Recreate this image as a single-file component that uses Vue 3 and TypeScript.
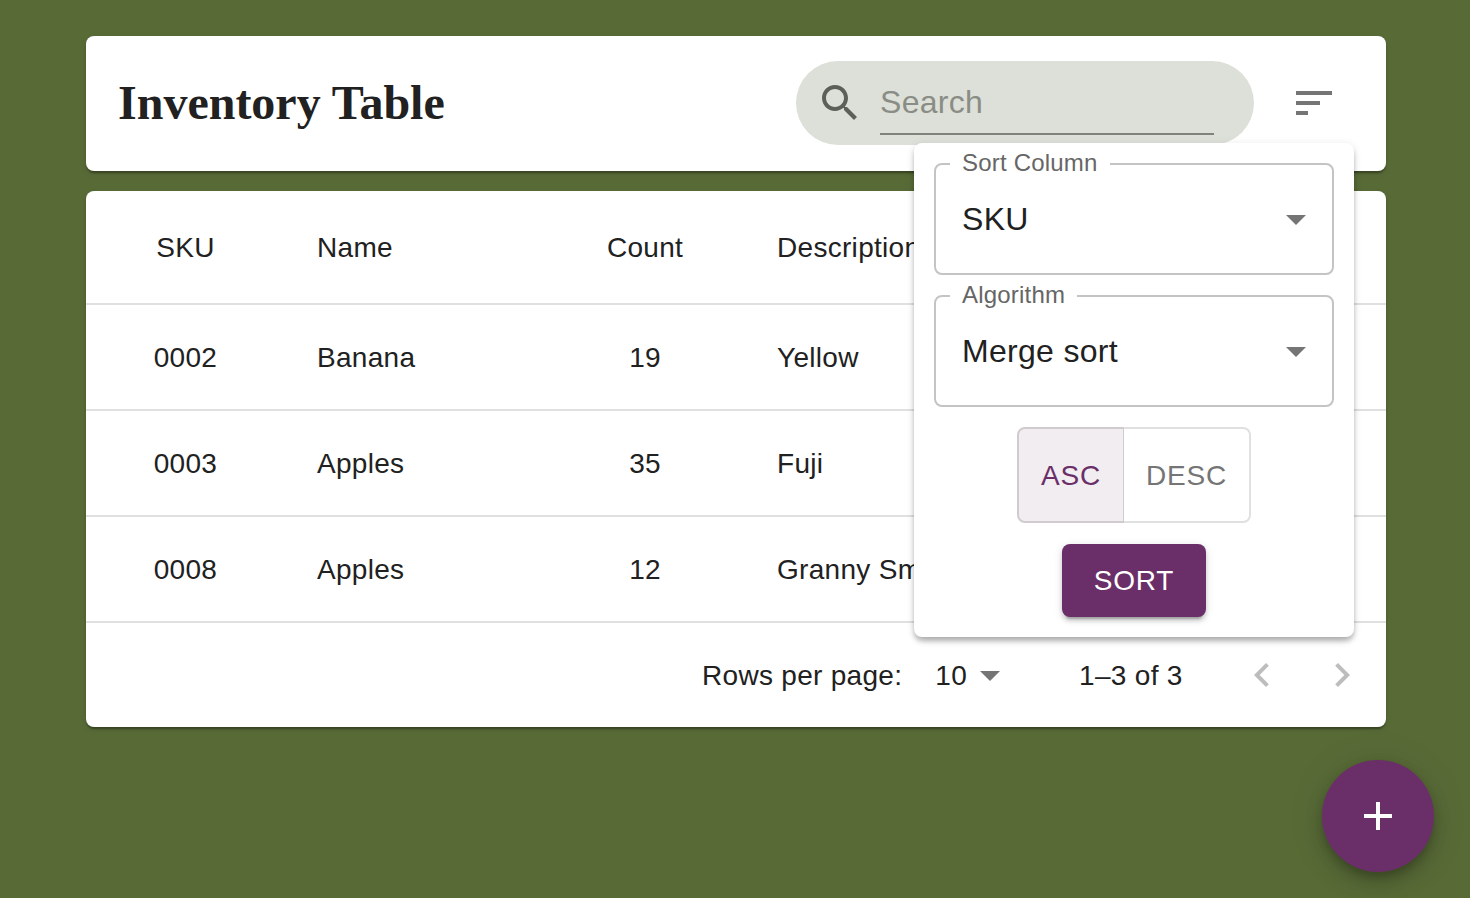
<script setup lang="ts">
interface Item {
  sku: string
  name: string
  count: number
  description: string
}

const items: Item[] = [
  { sku: '0002', name: 'Banana', count: 19, description: 'Yellow' },
  { sku: '0003', name: 'Apples', count: 35, description: 'Fuji' },
  { sku: '0008', name: 'Apples', count: 12, description: 'Granny Smith' },
]
</script>

<template>
  <div class="page">
    <header class="card top">
      <h1 class="title">Inventory Table</h1>
      <div class="search">
        <svg class="search__icon" viewBox="0 0 24 24">
          <path d="M15.5 14h-.79l-.28-.27C15.41 12.59 16 11.11 16 9.5 16 5.91 13.09 3 9.5 3S3 5.91 3 9.5 5.91 16 9.5 16c1.61 0 3.09-.59 4.23-1.57l.27.28v.79l5 4.99L20.49 19l-4.99-5zm-6 0C7.01 14 5 11.99 5 9.5S7.01 5 9.5 5 14 7.01 14 9.5 11.99 14 9.5 14z" />
        </svg>
        <div class="search__field">Search</div>
      </div>
      <button class="sort-toggle" type="button" aria-label="Sort">
        <svg viewBox="0 0 24 24"><path d="M3 18h6v-2H3v2zM3 6v2h18V6H3zm0 7h12v-2H3v2z" /></svg>
      </button>
    </header>

    <section class="card table-card">
      <table class="table">
        <colgroup>
          <col class="col-sku" />
          <col class="col-name" />
          <col class="col-count" />
          <col />
        </colgroup>
        <thead>
          <tr>
            <th class="center">SKU</th>
            <th>Name</th>
            <th class="center">Count</th>
            <th>Description</th>
          </tr>
        </thead>
        <tbody>
          <tr v-for="item in items" :key="item.sku">
            <td class="center">{{ item.sku }}</td>
            <td>{{ item.name }}</td>
            <td class="center">{{ item.count }}</td>
            <td>{{ item.description }}</td>
          </tr>
        </tbody>
      </table>
      <footer class="pager">
        <span class="pager__text">Rows per page:</span>
        <span class="pager__text pager__size">10</span>
        <svg class="pager__arrow" viewBox="0 0 24 24"><path d="M7 10l5 5 5-5z" /></svg>
        <span class="pager__text pager__count">1–3 of 3</span>
        <svg class="pager__nav" viewBox="0 0 24 24"><path d="M15.41 7.41L14 6l-6 6 6 6 1.41-1.41L10.83 12z" /></svg>
        <svg class="pager__nav pager__nav--next" viewBox="0 0 24 24"><path d="M10 6L8.59 7.41 13.17 12l-4.58 4.59L10 18l6-6z" /></svg>
      </footer>
    </section>

    <div class="popover">
      <div class="select">
        <span class="select__label">Sort Column</span>
        <span>SKU</span>
        <svg class="select__arrow" viewBox="0 0 24 24"><path d="M7 10l5 5 5-5z" /></svg>
      </div>
      <div class="select">
        <span class="select__label">Algorithm</span>
        <span>Merge sort</span>
        <svg class="select__arrow" viewBox="0 0 24 24"><path d="M7 10l5 5 5-5z" /></svg>
      </div>
      <div class="toggle">
        <button class="toggle__btn toggle__btn--active" type="button">ASC</button>
        <button class="toggle__btn" type="button">DESC</button>
      </div>
      <button class="sort-btn" type="button">SORT</button>
    </div>

    <button class="fab" type="button" aria-label="Add">
      <svg viewBox="0 0 24 24"><path d="M19 13h-6v6h-2v-6H5v-2h6V5h2v6h6v2z" /></svg>
    </button>
  </div>
</template>

<style>
html,
body {
  margin: 0;
  background-color: #586b37;
}
</style>

<style scoped>
.page {
  position: relative;
  box-sizing: border-box;
  width: 1470px;
  height: 898px;
  padding: 36px 84px 0 86px;
  overflow: hidden;
  background-color: #586b37;
  color: #212121;
  font-family: "Liberation Sans", Arial, sans-serif;
}

.card {
  background-color: #fff;
  border-radius: 8px;
  box-shadow: 0 4px 2px -2px rgba(0, 0, 0, 0.2), 0 2px 2px 0 rgba(0, 0, 0, 0.14), 0 2px 6px 0 rgba(0, 0, 0, 0.12);
}

.top {
  display: flex;
  align-items: center;
  height: 135px;
  padding: 0 24px 1px 32px;
  box-sizing: border-box;
  margin-bottom: 20px;
}

.title {
  flex: 1;
  margin: 0;
  font-family: "Liberation Serif", "Times New Roman", serif;
  font-size: 48px;
  font-weight: 700;
  line-height: 1;
}

.search {
  display: flex;
  align-items: center;
  box-sizing: border-box;
  width: 458px;
  height: 84px;
  padding: 0 40px 0 20px;
  border-radius: 42px;
  background-color: #dde0d8;
}

.search__icon {
  width: 48px;
  height: 48px;
  margin-right: 16px;
  fill: #5d6059;
}

.search__field {
  flex: 1;
  align-self: flex-start;
  box-sizing: border-box;
  height: 60px;
  margin-top: 14px;
  padding-top: 9px;
  border-bottom: 2px solid #80837c;
  color: #8a8d85;
  font-size: 32px;
  line-height: 36px;
  letter-spacing: 0.3px;
}

.sort-toggle {
  width: 96px;
  height: 96px;
  margin-left: 12px;
  padding: 24px;
  border: none;
  background: none;
}

.sort-toggle svg {
  display: block;
  width: 48px;
  height: 48px;
  fill: #757575;
}

.table-card {
  overflow: hidden;
}

.table {
  width: 100%;
  border-collapse: collapse;
  table-layout: fixed;
  font-size: 28px;
  letter-spacing: 0.3px;
}

.col-sku {
  width: 199px;
}

.col-name {
  width: 260px;
}

.col-count {
  width: 200px;
}

th,
td {
  box-sizing: border-box;
  padding: 2px 32px 0;
  border-bottom: 2px solid #e0e0e0;
  font-weight: 400;
  text-align: left;
  white-space: nowrap;
}

th {
  height: 113px;
}

td {
  height: 106px;
}

th.center,
td.center {
  text-align: center;
}

.pager {
  display: flex;
  align-items: center;
  height: 104px;
  box-sizing: border-box;
  padding-left: 616px;
  font-size: 28px;
  letter-spacing: 0.3px;
}

.pager__text {
  padding-top: 2px;
}

.pager__size {
  margin-left: 33px;
}

.pager__arrow {
  width: 48px;
  height: 48px;
  margin-left: -1px;
  fill: #757575;
}

.pager__count {
  margin-left: 65px;
}

.pager__nav {
  width: 48px;
  height: 48px;
  margin-left: 55px;
  fill: #bdbdbd;
}

.pager__nav--next {
  margin-left: 32px;
}

.popover {
  position: absolute;
  top: 143px;
  left: 914px;
  display: flex;
  flex-direction: column;
  align-items: center;
  box-sizing: border-box;
  width: 440px;
  height: 494px;
  padding: 20px;
  border-radius: 8px;
  background-color: #fff;
  box-shadow: 0 6px 10px -4px rgba(0, 0, 0, 0.2), 0 4px 4px 0 rgba(0, 0, 0, 0.14), 0 2px 8px 0 rgba(0, 0, 0, 0.12);
}

.select {
  position: relative;
  display: flex;
  align-items: center;
  justify-content: space-between;
  box-sizing: border-box;
  width: 100%;
  height: 112px;
  margin-bottom: 20px;
  padding: 0 12px 0 26px;
  border: 2px solid #c4c4c4;
  border-radius: 8px;
  font-size: 32px;
  letter-spacing: 0.3px;
}

.select__label {
  position: absolute;
  top: -16px;
  left: 14px;
  padding: 0 12px;
  background-color: #fff;
  color: #666;
  font-size: 24px;
  line-height: 28px;
  letter-spacing: 0.2px;
}

.select__arrow {
  width: 48px;
  height: 48px;
  fill: #757575;
}

.toggle {
  display: flex;
  margin-bottom: 21px;
}

.toggle__btn {
  box-sizing: border-box;
  height: 96px;
  padding: 2px 22px 0;
  border: 2px solid #e0e0e0;
  border-radius: 0 8px 8px 0;
  background-color: #fff;
  color: #757575;
  font-family: inherit;
  font-size: 28px;
  letter-spacing: 0.8px;
}

.toggle__btn--active {
  border-color: #cfcbcf;
  border-radius: 8px 0 0 8px;
  background-color: #f1edf1;
  color: #6a2f68;
}

.toggle__btn + .toggle__btn {
  margin-left: -1px;
  border-left: none;
}

.sort-btn {
  width: 144px;
  height: 73px;
  padding: 0;
  border: none;
  border-radius: 8px;
  background-color: #6a2f68;
  color: #fff;
  font-family: inherit;
  font-size: 28px;
  letter-spacing: 0.8px;
  box-shadow: 0 6px 2px -4px rgba(0, 0, 0, 0.2), 0 4px 4px 0 rgba(0, 0, 0, 0.14), 0 2px 10px 0 rgba(0, 0, 0, 0.12);
}

.fab {
  position: absolute;
  right: 36px;
  bottom: 26px;
  width: 112px;
  height: 112px;
  padding: 32px;
  border: none;
  border-radius: 50%;
  background-color: #6a2f68;
  box-shadow: 0 6px 10px -2px rgba(0, 0, 0, 0.2), 0 12px 20px 0 rgba(0, 0, 0, 0.14), 0 2px 36px 0 rgba(0, 0, 0, 0.12);
}

.fab svg {
  display: block;
  width: 48px;
  height: 48px;
  fill: #fff;
}
</style>
